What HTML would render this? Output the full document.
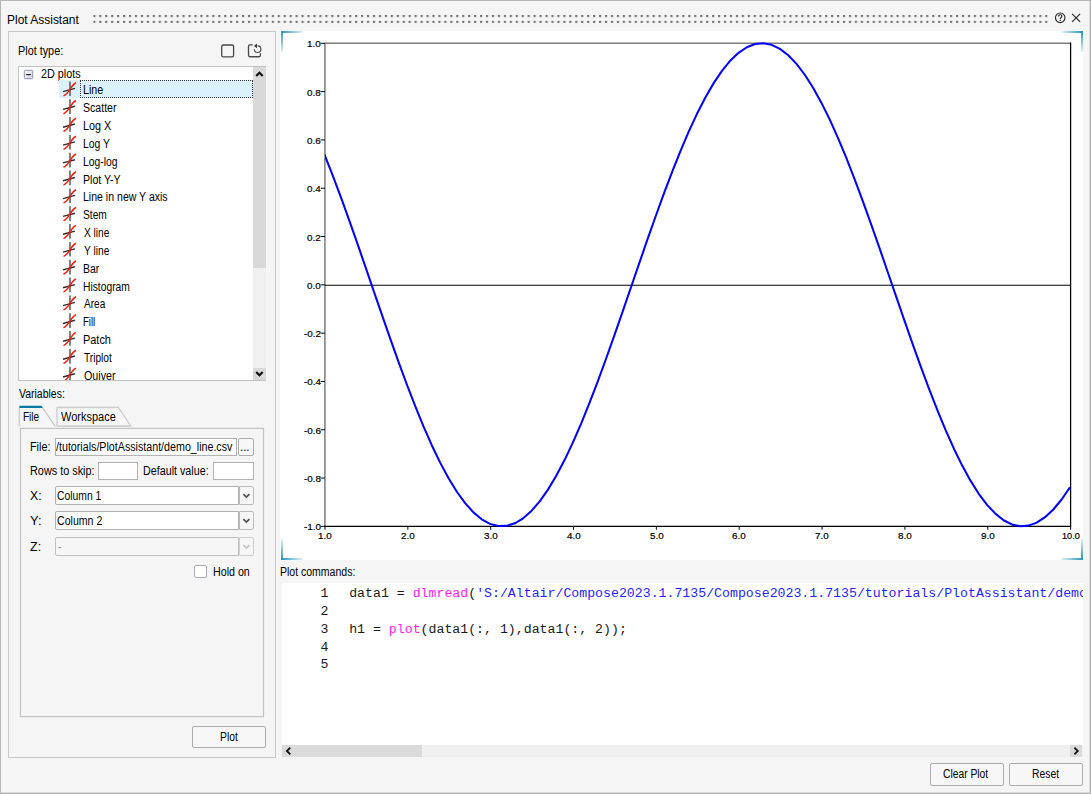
<!DOCTYPE html>
<html><head><meta charset="utf-8"><title>Plot Assistant</title>
<style>
html,body{margin:0;padding:0;}
body{width:1091px;height:794px;overflow:hidden;background:#f5f5f5;position:relative;font-family:"Liberation Sans",sans-serif;}
.t{position:absolute;white-space:pre;line-height:1;transform-origin:0 50%;display:block;}
.b{position:absolute;box-sizing:border-box;}
.m{font-family:"Liberation Mono",monospace;}
svg{position:absolute;overflow:visible;}
.inp{background:#fff;border:1px solid #b2b2b2;}
.btn{background:#f7f7f7;border:1px solid #adadad;border-radius:2px;}
</style></head><body>

<div class="b " style="left:0px;top:0px;width:1091px;height:794px;border:1px solid #b6b6b6;border-right-color:#b0b0b0;border-bottom-color:#b0b0b0;box-shadow:inset -1px -1px 0 #dcdcdc;"></div>
<span id="k0" class="t " style="left:7.12px;top:14.00px;font-size:12.5px;color:#000;transform:scaleX(0.9572);">Plot Assistant</span>
<svg style="left:0;top:0" width="1091" height="30"><defs><pattern id="gp" x="93.25" y="14.9" width="5.95" height="5.95" patternUnits="userSpaceOnUse"><rect x="0" y="0" width="2.2" height="2.2" fill="#727272"/></pattern></defs><rect x="93.25" y="14.9" width="954.5" height="8.2" fill="url(#gp)"/></svg>
<svg style="left:1053px;top:11px" width="32" height="14" viewBox="1053 11 32 14"><circle cx="1060.2" cy="17.8" r="4.75" fill="none" stroke="#2a2a2a" stroke-width="1.15"/><path d="M1058.5 16.5c0-1.1.75-1.75 1.7-1.75s1.7.6 1.7 1.55c0 1.3-1.7 1.2-1.7 2.7" fill="none" stroke="#2a2a2a" stroke-width="1.15"/><rect x="1059.6" y="19.8" width="1.25" height="1.25" fill="#2a2a2a"/><path d="M1072.1 13.8l8 8M1080.1 13.8l-8 8" stroke="#2a2a2a" stroke-width="1.15" fill="none"/></svg>
<div class="b " style="left:8px;top:31px;width:268px;height:727px;border:1px solid #c9c9c9;"></div>
<span id="k1" class="t " style="left:17.60px;top:45.00px;font-size:12px;color:#000;transform:scaleX(0.9032);">Plot type:</span>
<svg style="left:218px;top:40px" width="48" height="20" viewBox="218 40 48 20"><rect x="221.7" y="45.0" width="11.9" height="11.9" rx="1.6" fill="none" stroke="#484848" stroke-width="1.3"/><path d="M252.7 44.95h-2.7a1.5 1.5 0 0 0-1.5 1.5v8.8a1.5 1.5 0 0 0 1.5 1.5h8.9a1.5 1.5 0 0 0 1.5-1.5v-1.9" fill="none" stroke="#484848" stroke-width="1.3"/><path d="M257.6 45.9A3.3 3.3 0 1 1 254.3 49.3" fill="none" stroke="#4a4a4a" stroke-width="1.15"/><path d="M254.0 46.0L257.0 43.5V48.3z" fill="#3a3a3a"/></svg>
<div class="b " style="left:18px;top:66px;width:248px;height:315px;background:#fff;border:1px solid #c2c2c2;"></div>
<div class="b " style="left:253px;top:67px;width:13px;height:313px;background:#f0f0f0;"></div>
<div class="b " style="left:253px;top:67px;width:13px;height:201px;background:#d9d9d9;"></div>
<div class="b " style="left:253px;top:368px;width:13px;height:12px;background:#d9d9d9;"></div>
<svg style="left:253px;top:67px" width="13" height="313" viewBox="0 0 13 313"><path d="M3.2 9.0L6.45 5.7L9.7 9.0" fill="none" stroke="#0c0c0c" stroke-width="2.1"/><path d="M3.2 305.0L6.45 308.3L9.7 305.0" fill="none" stroke="#0c0c0c" stroke-width="2.1"/></svg>
<svg style="left:23px;top:69px" width="12" height="12" viewBox="0 0 12 12"><defs><linearGradient id="cg" x1="0" y1="0" x2="1" y2="1"><stop offset="0" stop-color="#fff"/><stop offset="1" stop-color="#c8cfe0"/></linearGradient></defs><rect x="1.3" y="1.3" width="8.4" height="8.4" rx="1" fill="url(#cg)" stroke="#8c94a8" stroke-width="1"/><rect x="3.2" y="5" width="4.6" height="1.2" fill="#222"/></svg>
<span id="k2" class="t " style="left:41.30px;top:68.00px;font-size:12px;color:#000;transform:scaleX(0.8993);">2D plots</span>
<div class="b " style="left:59px;top:80px;width:194px;height:18px;background:#dbf1fb;"></div>
<div class="b " style="left:80px;top:80px;width:173px;height:18px;border:1px dotted #333;"></div>
<span id="k3" class="t " style="left:83.36px;top:84.00px;font-size:12px;color:#000;transform:scaleX(0.8892);">Line</span>
<span id="k4" class="t " style="left:83.31px;top:102.00px;font-size:12px;color:#000;transform:scaleX(0.8807);">Scatter</span>
<span id="k5" class="t " style="left:83.36px;top:120.00px;font-size:12px;color:#000;transform:scaleX(0.8987);">Log X</span>
<span id="k6" class="t " style="left:83.36px;top:138.00px;font-size:12px;color:#000;transform:scaleX(0.8659);">Log Y</span>
<span id="k7" class="t " style="left:83.36px;top:156.00px;font-size:12px;color:#000;transform:scaleX(0.8636);">Log-log</span>
<span id="k8" class="t " style="left:83.19px;top:174.00px;font-size:12px;color:#000;transform:scaleX(0.8827);">Plot Y-Y</span>
<span id="k9" class="t " style="left:83.05px;top:191.00px;font-size:12px;color:#000;transform:scaleX(0.8790);">Line in new Y axis</span>
<span id="k10" class="t " style="left:83.12px;top:209.00px;font-size:12px;color:#000;transform:scaleX(0.8520);">Stem</span>
<span id="k11" class="t " style="left:83.52px;top:227.00px;font-size:12px;color:#000;transform:scaleX(0.8452);">X line</span>
<span id="k12" class="t " style="left:83.70px;top:245.00px;font-size:12px;color:#000;transform:scaleX(0.8500);">Y line</span>
<span id="k13" class="t " style="left:83.36px;top:263.00px;font-size:12px;color:#000;transform:scaleX(0.8707);">Bar</span>
<span id="k14" class="t " style="left:83.36px;top:281.00px;font-size:12px;color:#000;transform:scaleX(0.8565);">Histogram</span>
<span id="k15" class="t " style="left:83.80px;top:298.00px;font-size:12px;color:#000;transform:scaleX(0.8402);">Area</span>
<span id="k16" class="t " style="left:83.12px;top:316.00px;font-size:12px;color:#000;transform:scaleX(0.7951);">Fill</span>
<span id="k17" class="t " style="left:83.02px;top:334.00px;font-size:12px;color:#000;transform:scaleX(0.9109);">Patch</span>
<span id="k18" class="t " style="left:83.84px;top:352.00px;font-size:12px;color:#000;transform:scaleX(0.8449);">Triplot</span>
<span id="k19" class="t " style="left:83.68px;top:370.00px;font-size:12px;color:#000;transform:scaleX(0.8941);">Quiver</span>
<svg style="left:19px;top:67px" width="234" height="313" viewBox="19 67 234 313"><defs><g id="ic"><path d="M0 -7.4V7.3" stroke="#6a6a6a" stroke-width="1.7" fill="none"/><path d="M-7.0 2.8L4.9 -0.4" stroke="#2e2e2e" stroke-width="1.4" fill="none"/><path d="M-6.5 7.1C-1.2 5.4 1.2 -4.4 6.0 -6.1" stroke="#f21c0e" stroke-width="1.45" fill="none"/></g></defs><clipPath id="tc"><rect x="19" y="67" width="234" height="313"/></clipPath><g clip-path="url(#tc)">
<use href="#ic" x="70.0" y="88.8"/>
<use href="#ic" x="70.0" y="106.6"/>
<use href="#ic" x="70.0" y="124.4"/>
<use href="#ic" x="70.0" y="142.3"/>
<use href="#ic" x="70.0" y="160.1"/>
<use href="#ic" x="70.0" y="177.9"/>
<use href="#ic" x="70.0" y="195.8"/>
<use href="#ic" x="70.0" y="213.6"/>
<use href="#ic" x="70.0" y="231.5"/>
<use href="#ic" x="70.0" y="249.3"/>
<use href="#ic" x="70.0" y="267.1"/>
<use href="#ic" x="70.0" y="285.0"/>
<use href="#ic" x="70.0" y="302.8"/>
<use href="#ic" x="70.0" y="320.7"/>
<use href="#ic" x="70.0" y="338.5"/>
<use href="#ic" x="70.0" y="356.4"/>
<use href="#ic" x="70.0" y="374.2"/>
</g></svg>
<div class="b " style="left:19px;top:380px;width:247px;height:1px;background:#c2c2c2;"></div>
<div class="b " style="left:8px;top:381px;width:262px;height:6px;background:#f5f5f5;border-left:1px solid #c9c9c9;"></div>
<span id="k20" class="t " style="left:18.82px;top:388.00px;font-size:12px;color:#000;transform:scaleX(0.8741);">Variables:</span>
<svg style="left:15px;top:403px" width="255" height="320" viewBox="15 403 255 320"><path d="M19.3 426.6V407.5" fill="none" stroke="#c6c6c6" stroke-width="1.2"/><path d="M42.4 407.6L55.4 426.5" fill="none" stroke="#c6c6c6" stroke-width="1.2"/><path d="M57 426V407.5H118.4L130.8 426Z" fill="#f8f8f8" stroke="#cbcbcb" stroke-width="1.3"/><rect x="20.5" y="428.4" width="243" height="288.2" fill="none" stroke="#c2c2c2" stroke-width="1.2"/><path d="M19.4 405.8H41.6L42.9 408H19.4Z" fill="#0a79a7"/></svg>
<span id="k21" class="t " style="left:23.48px;top:411.00px;font-size:12px;color:#000;transform:scaleX(0.8351);">File</span>
<span id="k22" class="t " style="left:61.41px;top:411.00px;font-size:12px;color:#000;transform:scaleX(0.9162);">Workspace</span>
<span id="k23" class="t " style="left:29.68px;top:441.00px;font-size:12px;color:#000;transform:scaleX(0.9025);">File:</span>
<div class="b inp" style="left:55px;top:438px;width:182px;height:18px;"></div>
<span id="k24" class="t " style="left:55.60px;top:441.00px;font-size:12px;color:#000;transform:scaleX(0.8905);">/tutorials/PlotAssistant/demo_line.csv</span>
<div class="b btn" style="left:238px;top:438px;width:16px;height:18px;"></div>
<span id="k25" class="t " style="left:240.22px;top:441.00px;font-size:12px;color:#000;transform:scaleX(0.9530);">...</span>
<span id="k26" class="t " style="left:29.70px;top:465.00px;font-size:12px;color:#000;transform:scaleX(0.9048);">Rows to skip:</span>
<div class="b inp" style="left:98px;top:462px;width:40px;height:18px;"></div>
<span id="k27" class="t " style="left:143.19px;top:465.00px;font-size:12px;color:#000;transform:scaleX(0.8948);">Default value:</span>
<div class="b inp" style="left:213px;top:462px;width:41px;height:18px;"></div>
<span id="k28" class="t " style="left:29.65px;top:490.00px;font-size:12px;color:#000;transform:scaleX(1.0198);">X:</span>
<div class="b " style="left:55px;top:486px;width:184px;height:19px;background:#fff;border:1px solid #b0b0b0;border-radius:2px 0 0 2px;"></div>
<div class="b " style="left:239px;top:486px;width:15px;height:19px;background:#f6f6f6;border:1px solid #bcbcbc;border-radius:0 2px 2px 0;"></div>
<svg style="left:239px;top:486px" width="15" height="19" viewBox="0 0 15 19"><path d="M4.4 8.1L7.4 11.1L10.4 8.1" fill="none" stroke="#505050" stroke-width="1.7"/></svg>
<span id="k29" class="t " style="left:56.98px;top:490.00px;font-size:12px;color:#000;transform:scaleX(0.8618);">Column 1</span>
<span id="k30" class="t " style="left:29.74px;top:515.00px;font-size:12px;color:#000;transform:scaleX(1.0736);">Y:</span>
<div class="b " style="left:55px;top:511px;width:184px;height:19px;background:#fff;border:1px solid #b0b0b0;border-radius:2px 0 0 2px;"></div>
<div class="b " style="left:239px;top:511px;width:15px;height:19px;background:#f6f6f6;border:1px solid #bcbcbc;border-radius:0 2px 2px 0;"></div>
<svg style="left:239px;top:511px" width="15" height="19" viewBox="0 0 15 19"><path d="M4.4 8.1L7.4 11.1L10.4 8.1" fill="none" stroke="#505050" stroke-width="1.7"/></svg>
<span id="k31" class="t " style="left:56.96px;top:515.00px;font-size:12px;color:#000;transform:scaleX(0.8818);">Column 2</span>
<span id="k32" class="t " style="left:29.73px;top:541.00px;font-size:12px;color:#000;transform:scaleX(1.0403);">Z:</span>
<div class="b " style="left:55px;top:537px;width:184px;height:19px;background:#f6f6f6;border:1px solid #c0c0c0;border-radius:2px 0 0 2px;"></div>
<div class="b " style="left:239px;top:537px;width:15px;height:19px;background:#f6f6f6;border:1px solid #cfcfcf;border-radius:0 2px 2px 0;"></div>
<svg style="left:239px;top:537px" width="15" height="19" viewBox="0 0 15 19"><path d="M4.4 8.1L7.4 11.1L10.4 8.1" fill="none" stroke="#c4c4c4" stroke-width="1.7"/></svg>
<span id="k33" class="t " style="left:57.59px;top:540.54px;font-size:12px;color:#8a8a8a;transform:scaleX(0.8600);">-</span>
<div class="b " style="left:194px;top:565px;width:13px;height:13px;background:#fff;border:1px solid #a9aab4;border-radius:2px;"></div>
<span id="k34" class="t " style="left:213.19px;top:566.00px;font-size:12px;color:#000;transform:scaleX(0.8899);">Hold on</span>
<div class="b btn" style="left:192px;top:726px;width:74px;height:22px;"></div>
<span id="k35" class="t " style="left:219.90px;top:731.00px;font-size:12px;color:#000;transform:scaleX(0.8600);">Plot</span>
<div class="b " style="left:280px;top:31px;width:803px;height:529px;background:#fff;"></div>
<svg style="left:280px;top:31px" width="803" height="529" viewBox="280 31 803 529"><defs><linearGradient id="gh" x1="0" x2="1" y1="0" y2="0"><stop offset="0" stop-color="#2a96bd"/><stop offset="1" stop-color="#2a96bd" stop-opacity="0.15"/></linearGradient><linearGradient id="gv" x1="0" x2="0" y1="0" y2="1"><stop offset="0" stop-color="#2a96bd"/><stop offset="1" stop-color="#2a96bd" stop-opacity="0.15"/></linearGradient><linearGradient id="ghr" x1="1" x2="0" y1="0" y2="0"><stop offset="0" stop-color="#2a96bd"/><stop offset="1" stop-color="#2a96bd" stop-opacity="0.15"/></linearGradient><linearGradient id="gvr" x1="0" x2="0" y1="1" y2="0"><stop offset="0" stop-color="#2a96bd"/><stop offset="1" stop-color="#2a96bd" stop-opacity="0.15"/></linearGradient></defs><rect x="281" y="31" width="21.5" height="2" fill="url(#gh)"/><rect x="281" y="31" width="2" height="21" fill="url(#gv)"/><rect x="1061.5" y="31" width="21.5" height="2" fill="url(#ghr)"/><rect x="1081" y="31" width="2" height="21" fill="url(#gv)"/><rect x="281" y="558" width="21.5" height="2" fill="url(#gh)"/><rect x="281" y="539" width="2" height="21" fill="url(#gvr)"/><rect x="1061.5" y="558" width="21.5" height="2" fill="url(#ghr)"/><rect x="1081" y="539" width="2" height="21" fill="url(#gvr)"/><path d="M324.9 526.3V43.2H1070.6" fill="none" stroke="#7c7c7c" stroke-width="1.5"/><path d="M324.2 526.3H1070.6V42.6" fill="none" stroke="#000" stroke-width="1.25"/><path d="M320.7 43.30H325.0" stroke="#111" stroke-width="1.05"/><path d="M320.7 91.61H325.0" stroke="#111" stroke-width="1.05"/><path d="M320.7 139.92H325.0" stroke="#111" stroke-width="1.05"/><path d="M320.7 188.23H325.0" stroke="#111" stroke-width="1.05"/><path d="M320.7 236.54H325.0" stroke="#111" stroke-width="1.05"/><path d="M320.7 284.85H325.0" stroke="#111" stroke-width="1.05"/><path d="M320.7 333.16H325.0" stroke="#111" stroke-width="1.05"/><path d="M320.7 381.47H325.0" stroke="#111" stroke-width="1.05"/><path d="M320.7 429.78H325.0" stroke="#111" stroke-width="1.05"/><path d="M320.7 478.09H325.0" stroke="#111" stroke-width="1.05"/><path d="M320.7 526.40H325.0" stroke="#111" stroke-width="1.05"/><path d="M325.00 526.3V529.8" stroke="#111" stroke-width="1.05"/><path d="M407.84 526.3V529.8" stroke="#111" stroke-width="1.05"/><path d="M490.69 526.3V529.8" stroke="#111" stroke-width="1.05"/><path d="M573.53 526.3V529.8" stroke="#111" stroke-width="1.05"/><path d="M656.38 526.3V529.8" stroke="#111" stroke-width="1.05"/><path d="M739.22 526.3V529.8" stroke="#111" stroke-width="1.05"/><path d="M822.07 526.3V529.8" stroke="#111" stroke-width="1.05"/><path d="M904.91 526.3V529.8" stroke="#111" stroke-width="1.05"/><path d="M987.76 526.3V529.8" stroke="#111" stroke-width="1.05"/><path d="M1070.60 526.3V529.8" stroke="#111" stroke-width="1.05"/><path d="M325.0 285.20H1070.6" stroke="#000" stroke-width="1.1"/><clipPath id="pc"><rect x="325" y="41" width="746" height="487"/></clipPath><polyline clip-path="url(#pc)" points="324.30,154.24 332.58,175.18 340.87,197.22 349.15,220.14 357.44,243.69 365.72,267.66 374.01,291.80 382.29,315.87 390.58,339.63 398.86,362.84 407.14,385.27 415.43,406.70 423.71,426.90 432.00,445.69 440.28,462.87 448.57,478.27 456.85,491.73 465.14,503.13 473.42,512.34 481.70,519.28 489.99,523.88 498.27,526.09 506.56,525.89 514.84,523.28 523.13,518.28 531.41,510.95 539.70,501.36 547.98,489.61 556.26,475.81 564.55,460.10 572.83,442.64 581.12,423.60 589.40,403.17 597.69,381.56 605.97,358.99 614.26,335.67 622.54,311.84 630.82,287.74 639.11,263.61 647.39,239.70 655.68,216.23 663.96,193.45 672.25,171.58 680.53,150.84 688.82,131.44 697.10,113.57 705.38,97.41 713.67,83.13 721.95,70.85 730.24,60.72 738.52,52.82 746.81,47.24 755.09,44.04 763.38,43.23 771.66,44.85 779.94,48.86 788.23,55.22 796.51,63.88 804.80,74.75 813.08,87.71 821.37,102.64 829.65,119.40 837.94,137.80 846.22,157.68 854.50,178.82 862.79,201.02 871.07,224.06 879.36,247.70 887.64,271.72 895.93,295.86 904.21,319.90 912.50,343.58 920.78,366.67 929.06,388.95 937.35,410.18 945.63,430.17 953.92,448.69 962.20,465.59 970.49,480.67 978.77,493.80 987.06,504.83 995.34,513.67 1003.62,520.22 1011.91,524.42 1020.19,526.23 1028.48,525.62 1036.76,522.60 1045.05,517.21 1053.33,509.49 1061.62,499.53 1069.90,487.43" fill="none" stroke="#0303f6" stroke-width="2.05" stroke-linejoin="round"/></svg>
<span class="t " style="left:307.16px;top:39.00px;font-size:9.6px;color:#000;transform:scaleX(1.0300);-webkit-text-stroke:0.2px #000;">1.0</span>
<span class="t " style="left:307.16px;top:88.00px;font-size:9.6px;color:#000;transform:scaleX(1.0300);-webkit-text-stroke:0.2px #000;">0.8</span>
<span class="t " style="left:307.16px;top:136.00px;font-size:9.6px;color:#000;transform:scaleX(1.0300);-webkit-text-stroke:0.2px #000;">0.6</span>
<span class="t " style="left:307.16px;top:184.00px;font-size:9.6px;color:#000;transform:scaleX(1.0300);-webkit-text-stroke:0.2px #000;">0.4</span>
<span class="t " style="left:307.16px;top:233.00px;font-size:9.6px;color:#000;transform:scaleX(1.0300);-webkit-text-stroke:0.2px #000;">0.2</span>
<span class="t " style="left:307.16px;top:281.00px;font-size:9.6px;color:#000;transform:scaleX(1.0300);-webkit-text-stroke:0.2px #000;">0.0</span>
<span class="t " style="left:303.86px;top:329.00px;font-size:9.6px;color:#000;transform:scaleX(1.0300);-webkit-text-stroke:0.2px #000;">-0.2</span>
<span class="t " style="left:303.86px;top:377.00px;font-size:9.6px;color:#000;transform:scaleX(1.0300);-webkit-text-stroke:0.2px #000;">-0.4</span>
<span class="t " style="left:303.86px;top:426.00px;font-size:9.6px;color:#000;transform:scaleX(1.0300);-webkit-text-stroke:0.2px #000;">-0.6</span>
<span class="t " style="left:303.86px;top:474.00px;font-size:9.6px;color:#000;transform:scaleX(1.0300);-webkit-text-stroke:0.2px #000;">-0.8</span>
<span class="t " style="left:303.86px;top:522.00px;font-size:9.6px;color:#000;transform:scaleX(1.0300);-webkit-text-stroke:0.2px #000;">-1.0</span>
<span class="t " style="left:318.23px;top:531.00px;font-size:9.6px;color:#000;transform:scaleX(1.0300);-webkit-text-stroke:0.2px #000;">1.0</span>
<span class="t " style="left:401.07px;top:531.00px;font-size:9.6px;color:#000;transform:scaleX(1.0300);-webkit-text-stroke:0.2px #000;">2.0</span>
<span class="t " style="left:483.92px;top:531.00px;font-size:9.6px;color:#000;transform:scaleX(1.0300);-webkit-text-stroke:0.2px #000;">3.0</span>
<span class="t " style="left:566.76px;top:531.00px;font-size:9.6px;color:#000;transform:scaleX(1.0300);-webkit-text-stroke:0.2px #000;">4.0</span>
<span class="t " style="left:649.61px;top:531.00px;font-size:9.6px;color:#000;transform:scaleX(1.0300);-webkit-text-stroke:0.2px #000;">5.0</span>
<span class="t " style="left:732.45px;top:531.00px;font-size:9.6px;color:#000;transform:scaleX(1.0300);-webkit-text-stroke:0.2px #000;">6.0</span>
<span class="t " style="left:815.29px;top:531.00px;font-size:9.6px;color:#000;transform:scaleX(1.0300);-webkit-text-stroke:0.2px #000;">7.0</span>
<span class="t " style="left:898.14px;top:531.00px;font-size:9.6px;color:#000;transform:scaleX(1.0300);-webkit-text-stroke:0.2px #000;">8.0</span>
<span class="t " style="left:980.98px;top:531.00px;font-size:9.6px;color:#000;transform:scaleX(1.0300);-webkit-text-stroke:0.2px #000;">9.0</span>
<span class="t " style="left:1061.73px;top:531.00px;font-size:9.6px;color:#000;transform:scaleX(0.9600);-webkit-text-stroke:0.2px #000;">10.0</span>
<span id="k36" class="t " style="left:280.47px;top:566.00px;font-size:12px;color:#000;transform:scaleX(0.8752);">Plot commands:</span>
<div class="b " style="left:282px;top:583px;width:801px;height:162px;background:#fff;"></div>
<div class="b " style="left:282px;top:745px;width:801px;height:12px;background:#f0f0f0;"></div>
<div class="b " style="left:282px;top:745px;width:140px;height:12px;background:#dadada;"></div>
<div class="b " style="left:1070px;top:745px;width:12px;height:12px;background:#dadada;"></div>
<svg style="left:282px;top:745px" width="801" height="12" viewBox="0 0 801 12"><path d="M8.3 2.6L4.9 6L8.3 9.4" fill="none" stroke="#111" stroke-width="1.8"/><path d="M792.4 2.6L795.8 6L792.4 9.4" fill="none" stroke="#111" stroke-width="1.8"/></svg>
<div class="b" style="left:282px;top:583px;width:801px;height:162px;overflow:hidden;">
<span class="t m" style="left:38.60px;top:4px;font-size:13.23px;color:#1a1a1a;">1</span>
<span class="t m" style="left:67.20px;top:4px;font-size:13.23px;"><span style="color:#1a1a1a">data1 = </span><span style="color:#ff1cf0">dlmread</span><span style="color:#1a1a1a">(</span><span style="color:#1f1fff">'S:/Altair/Compose2023.1.7135/Compose2023.1.7135/tutorials/PlotAssistant/demo_line.csv'</span><span style="color:#1a1a1a">);</span></span>
<span class="t m" style="left:38.60px;top:22px;font-size:13.23px;color:#1a1a1a;">2</span>
<span class="t m" style="left:38.60px;top:40px;font-size:13.23px;color:#1a1a1a;">3</span>
<span class="t m" style="left:67.20px;top:40px;font-size:13.23px;"><span style="color:#1a1a1a">h1 = </span><span style="color:#ff1cf0">plot</span><span style="color:#1a1a1a">(data1(:, 1),data1(:, 2));</span></span>
<span class="t m" style="left:38.60px;top:58px;font-size:13.23px;color:#1a1a1a;">4</span>
<span class="t m" style="left:38.60px;top:75px;font-size:13.23px;color:#1a1a1a;">5</span>
</div>
<div class="b btn" style="left:930px;top:763px;width:74px;height:23px;"></div>
<span id="k37" class="t " style="left:943.48px;top:768.00px;font-size:12px;color:#000;transform:scaleX(0.8574);">Clear Plot</span>
<div class="b btn" style="left:1009px;top:763px;width:74px;height:23px;"></div>
<span id="k38" class="t " style="left:1031.95px;top:768.00px;font-size:12px;color:#000;transform:scaleX(0.8632);">Reset</span>
</body></html>
